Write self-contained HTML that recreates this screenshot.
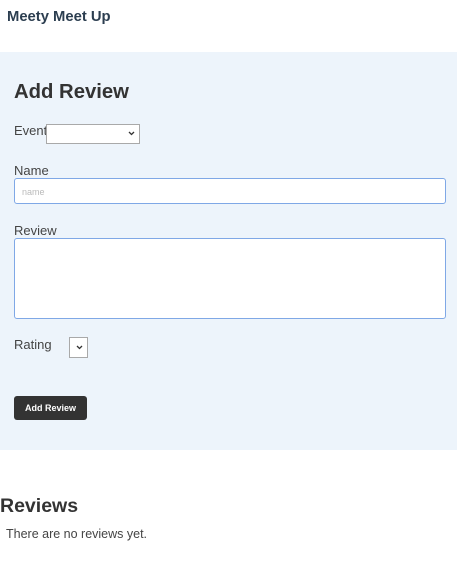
<!DOCTYPE html>
<html><head><style>
body{margin:0;width:457px;height:572px;background:#fff;font-family:"Liberation Sans",Arial,sans-serif;color:#333;position:relative;overflow:hidden}
.a{position:absolute}
.sel{position:absolute;background:#fff;border:1px solid #a9a9a9;box-sizing:border-box}
.chev{position:absolute;right:4px;top:50%;margin-top:-3px}
</style></head><body>
<div class="a" style="left:7px;top:9px;font-size:14.8px;font-weight:bold;color:#2c3e50">Meety Meet Up</div>
<div class="a" style="left:0;top:52px;width:457px;height:398px;background:#edf4fb"></div>
<div class="a" style="left:14px;top:81px;font-size:20.3px;font-weight:bold;color:#333">Add Review</div>
<div class="a" style="left:14px;top:123px;font-size:13px;color:#444">Event</div>
<div class="sel" style="left:46px;top:124px;width:94px;height:20px"><svg class="chev" width="7" height="5" viewBox="0 0 7 5"><path d="M1 1L3.5 3.5L6 1" stroke="#333" stroke-width="1.3" fill="none"/></svg></div>
<div class="a" style="left:14px;top:163px;font-size:13px;color:#444">Name</div>
<div class="a" style="left:14px;top:178px;width:432px;height:26px;box-sizing:border-box;border:1px solid #7fa8e6;border-radius:3px;background:#fff"><span style="position:absolute;left:7px;top:8px;font-size:9px;color:#bbb">name</span></div>
<div class="a" style="left:14px;top:223px;font-size:13px;color:#444">Review</div>
<div class="a" style="left:14px;top:238px;width:432px;height:81px;box-sizing:border-box;border:1px solid #7fa8e6;border-radius:3px;background:#fff"></div>
<div class="a" style="left:14px;top:337px;font-size:13px;color:#444">Rating</div>
<div class="sel" style="left:69px;top:337px;width:19px;height:21px"><svg class="chev" width="7" height="5" viewBox="0 0 7 5"><path d="M1 1L3.5 3.5L6 1" stroke="#333" stroke-width="1.3" fill="none"/></svg></div>
<div class="a" style="left:14px;top:396px;width:73px;height:24px;background:#333;border-radius:3px;color:#fff;font-size:9px;font-weight:bold;text-align:center;line-height:24px">Add Review</div>
<div class="a" style="left:0;top:495px;font-size:19.5px;font-weight:bold;color:#333">Reviews</div>
<div class="a" style="left:6px;top:527px;font-size:12.5px;color:#444">There are no reviews yet.</div>
</body></html>
